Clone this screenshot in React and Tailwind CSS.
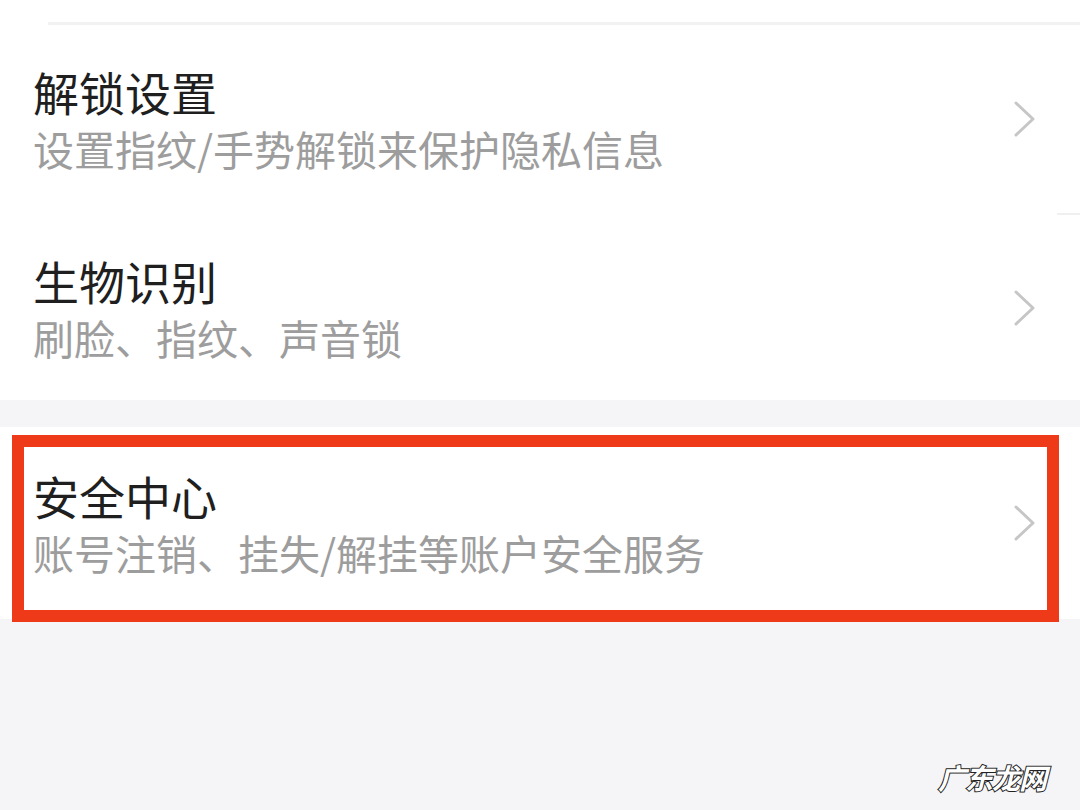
import React from "react";

const Chevron = () => (
  <svg width="26" height="36" viewBox="0 0 26 36" className="shrink-0">
    <path d="M4 2 L21 18 L4 34" fill="none" stroke="#c6c6c6" strokeWidth="3" strokeLinecap="round" strokeLinejoin="round" />
  </svg>
);

const Item = ({ title, sub, h }) => (
  <div className={`flex items-center justify-between pl-[33px] pr-[42px] ${h}`}>
    <div className="flex flex-col gap-[8px]">
      <div className="text-[46px] leading-[50px] text-[#1f1f1f]">{title}</div>
      <div className="text-[41px] leading-[48px] text-[#9d9d9d]">{sub}</div>
    </div>
    <Chevron />
  </div>
);

export default function App() {
  return (
    <div
      className="w-[1080px] h-[810px] overflow-hidden bg-[#f5f5f7] relative"
      style={{ fontFamily: '"Noto Sans CJK SC", "Noto Sans", sans-serif' }}
    >
      <div className="bg-white">
        <div className="h-[22px]" />
        <div className="ml-[48px] h-[3px] bg-[#f2f2f2]" />
        <Item title="解锁设置" sub="设置指纹/手势解锁来保护隐私信息" h="h-[188px]" />
        <div className="flex justify-end">
          <div className="w-[23px] h-[2px] bg-[#f0f0f0]" />
        </div>
        <Item title="生物识别" sub="刷脸、指纹、声音锁" h="h-[185px]" />
      </div>
      <div className="h-[27px]" />
      <div className="relative bg-white">
        <Item title="安全中心" sub="账号注销、挂失/解挂等账户安全服务" h="h-[192px]" />
        <div className="absolute left-[12px] top-[8px] w-[1047px] h-[187px] border-[12px] border-[#ef3a19]" />
      </div>
      <div
        className="absolute right-[34px] bottom-[12px] text-[28px] font-bold italic tracking-[-1px] text-white [-webkit-text-stroke:2px_#222] [paint-order:stroke_fill]"
      >
        广东龙网
      </div>
    </div>
  );
}
